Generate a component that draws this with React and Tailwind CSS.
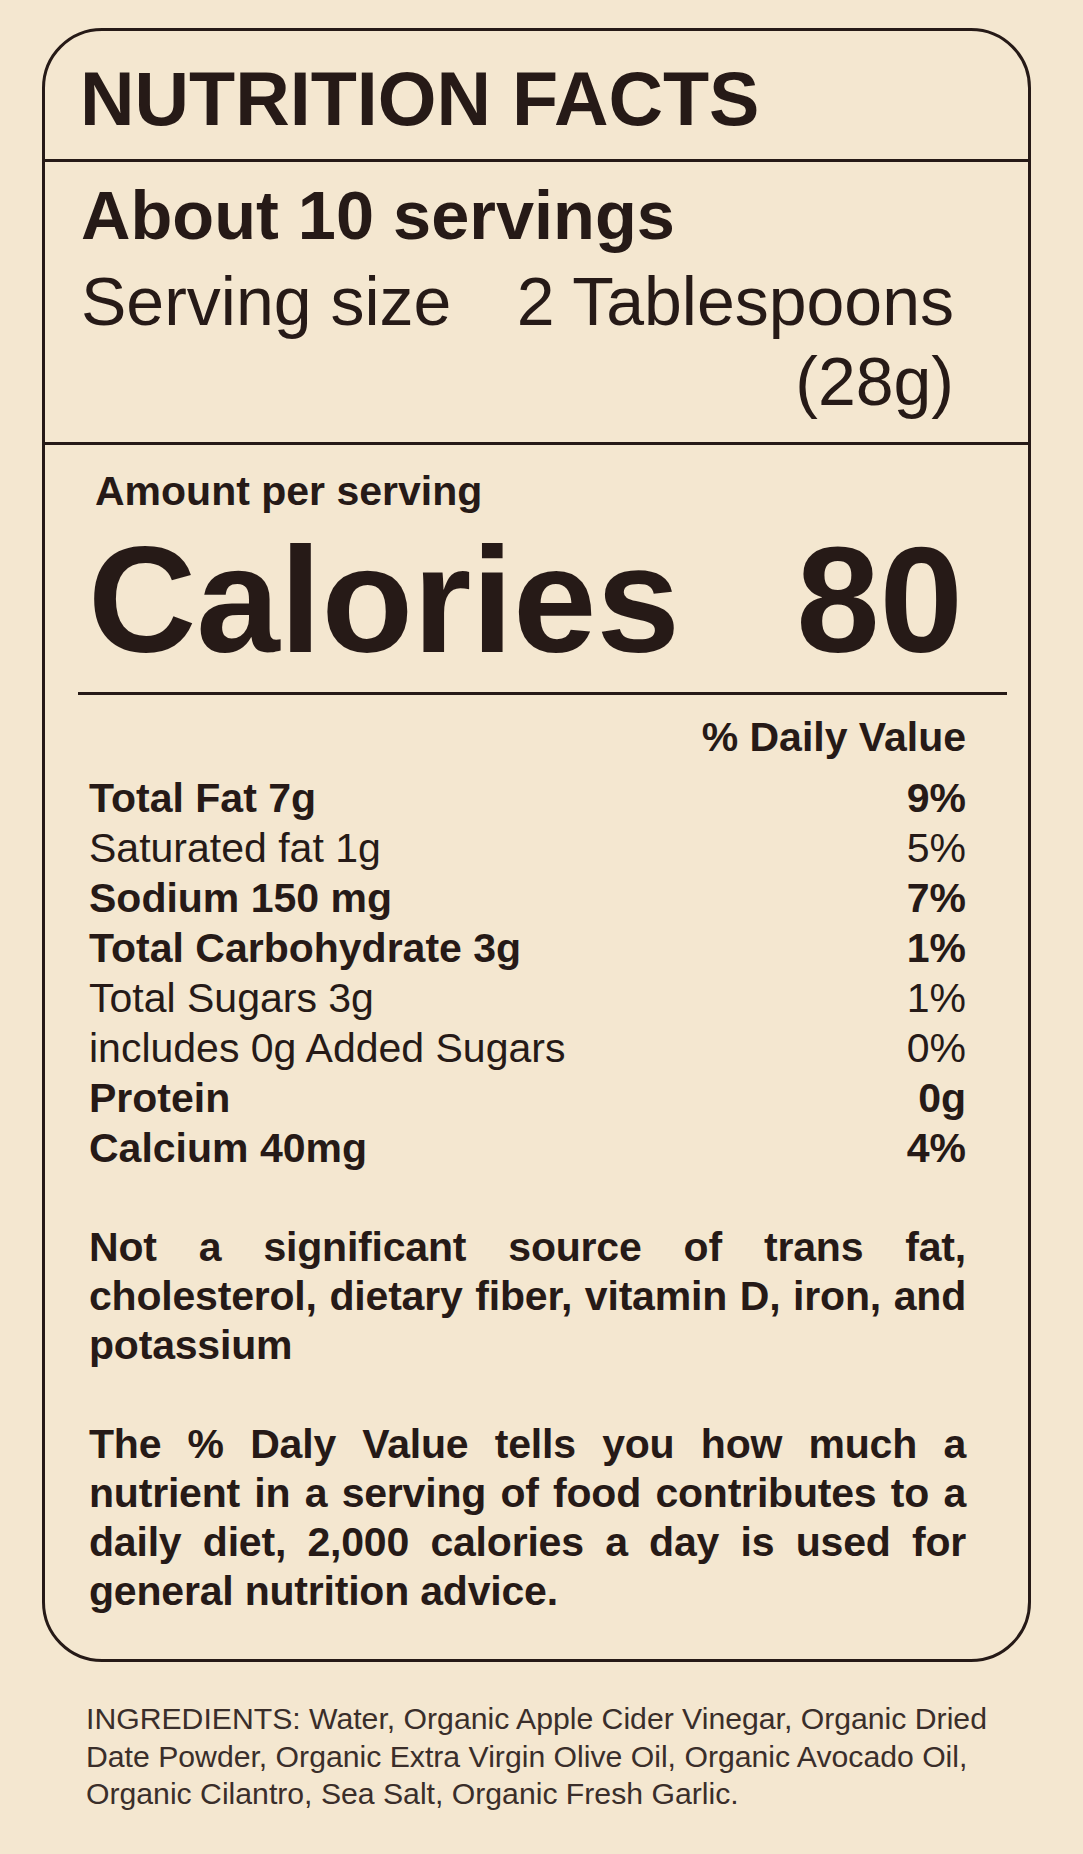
import React from "react";

const rows = [
  { label: "Total Fat 7g", value: "9%", bold: true },
  { label: "Saturated fat 1g", value: "5%", bold: false },
  { label: "Sodium 150 mg", value: "7%", bold: true },
  { label: "Total Carbohydrate 3g", value: "1%", bold: true },
  { label: "Total Sugars 3g", value: "1%", bold: false },
  { label: "includes 0g Added Sugars", value: "0%", bold: false },
  { label: "Protein", value: "0g", bold: true },
  { label: "Calcium 40mg", value: "4%", bold: true },
];

function App() {
  return (
    <div className="min-h-screen bg-[#f4e7d0] pt-[28px] pl-[42px] text-[#261a17] font-['Liberation_Sans',Arial,sans-serif]">
      <div className="w-[989px] border-[3px] border-[#261a17] rounded-[60px]">
        {/* title */}
        <div className="pl-[35px] pt-[31px] pb-[21px] border-b-[3px] border-[#261a17]">
          <h1 className="text-[75.5px] leading-none font-bold">NUTRITION FACTS</h1>
        </div>

        {/* servings */}
        <div className="pl-[36px] pr-[74px] pt-[20px] pb-[21px] border-b-[3px] border-[#261a17]">
          <p className="text-[68.5px] leading-none font-bold">About 10 servings</p>
          <div className="mt-[11px] flex justify-between text-[68px] leading-[80px]">
            <span>Serving size</span>
            <span className="w-[450px] text-right">2 Tablespoons (28g)</span>
          </div>
        </div>

        {/* amounts */}
        <div className="pl-[36px] pr-[62px] pt-[21px] pb-[43px]">
          <p className="ml-[14px] text-[41px] leading-[50px] font-bold">Amount per serving</p>
          <div className="mt-[9px] flex justify-between text-[150px] leading-none font-bold">
            <span className="ml-[7px]">Calories</span>
            <span className="mr-[3px]">80</span>
          </div>
          <div className="mt-[17px] -ml-[3px] -mr-[41px] h-[3px] bg-[#261a17]"></div>

          <div className="ml-[8px] text-[41px] leading-[50px]">
            <p className="mt-[17px] text-right font-bold">% Daily Value</p>
            <div className="mt-[11px]">
              {rows.map((row, index) => (
                <div
                  key={index}
                  className={`flex justify-between ${row.bold ? "font-bold" : "font-normal"}`}
                >
                  <span>{row.label}</span>
                  <span>{row.value}</span>
                </div>
              ))}
            </div>

            <p className="mt-[50px] leading-[49px] tracking-[-0.2px] font-bold text-justify">
              Not a significant source of trans fat, cholesterol, dietary fiber,
              vitamin D, iron, and potassium
            </p>
            <p className="mt-[50px] leading-[49px] tracking-[-0.2px] font-bold text-justify">
              The % Daly Value tells you how much a nutrient in a serving of
              food contributes to a daily diet, 2,000 calories a day is used for
              general nutrition advice.
            </p>
          </div>
        </div>
      </div>

      {/* ingredients */}
      <p className="mt-[38px] ml-[44px] w-[925px] text-[30.2px] leading-[37.5px] text-[#3a2e2a]">
        INGREDIENTS: Water, Organic Apple Cider Vinegar, Organic Dried Date
        Powder, Organic Extra Virgin Olive Oil, Organic Avocado Oil, Organic
        Cilantro, Sea Salt, Organic Fresh Garlic.
      </p>
    </div>
  );
}

export default App;
